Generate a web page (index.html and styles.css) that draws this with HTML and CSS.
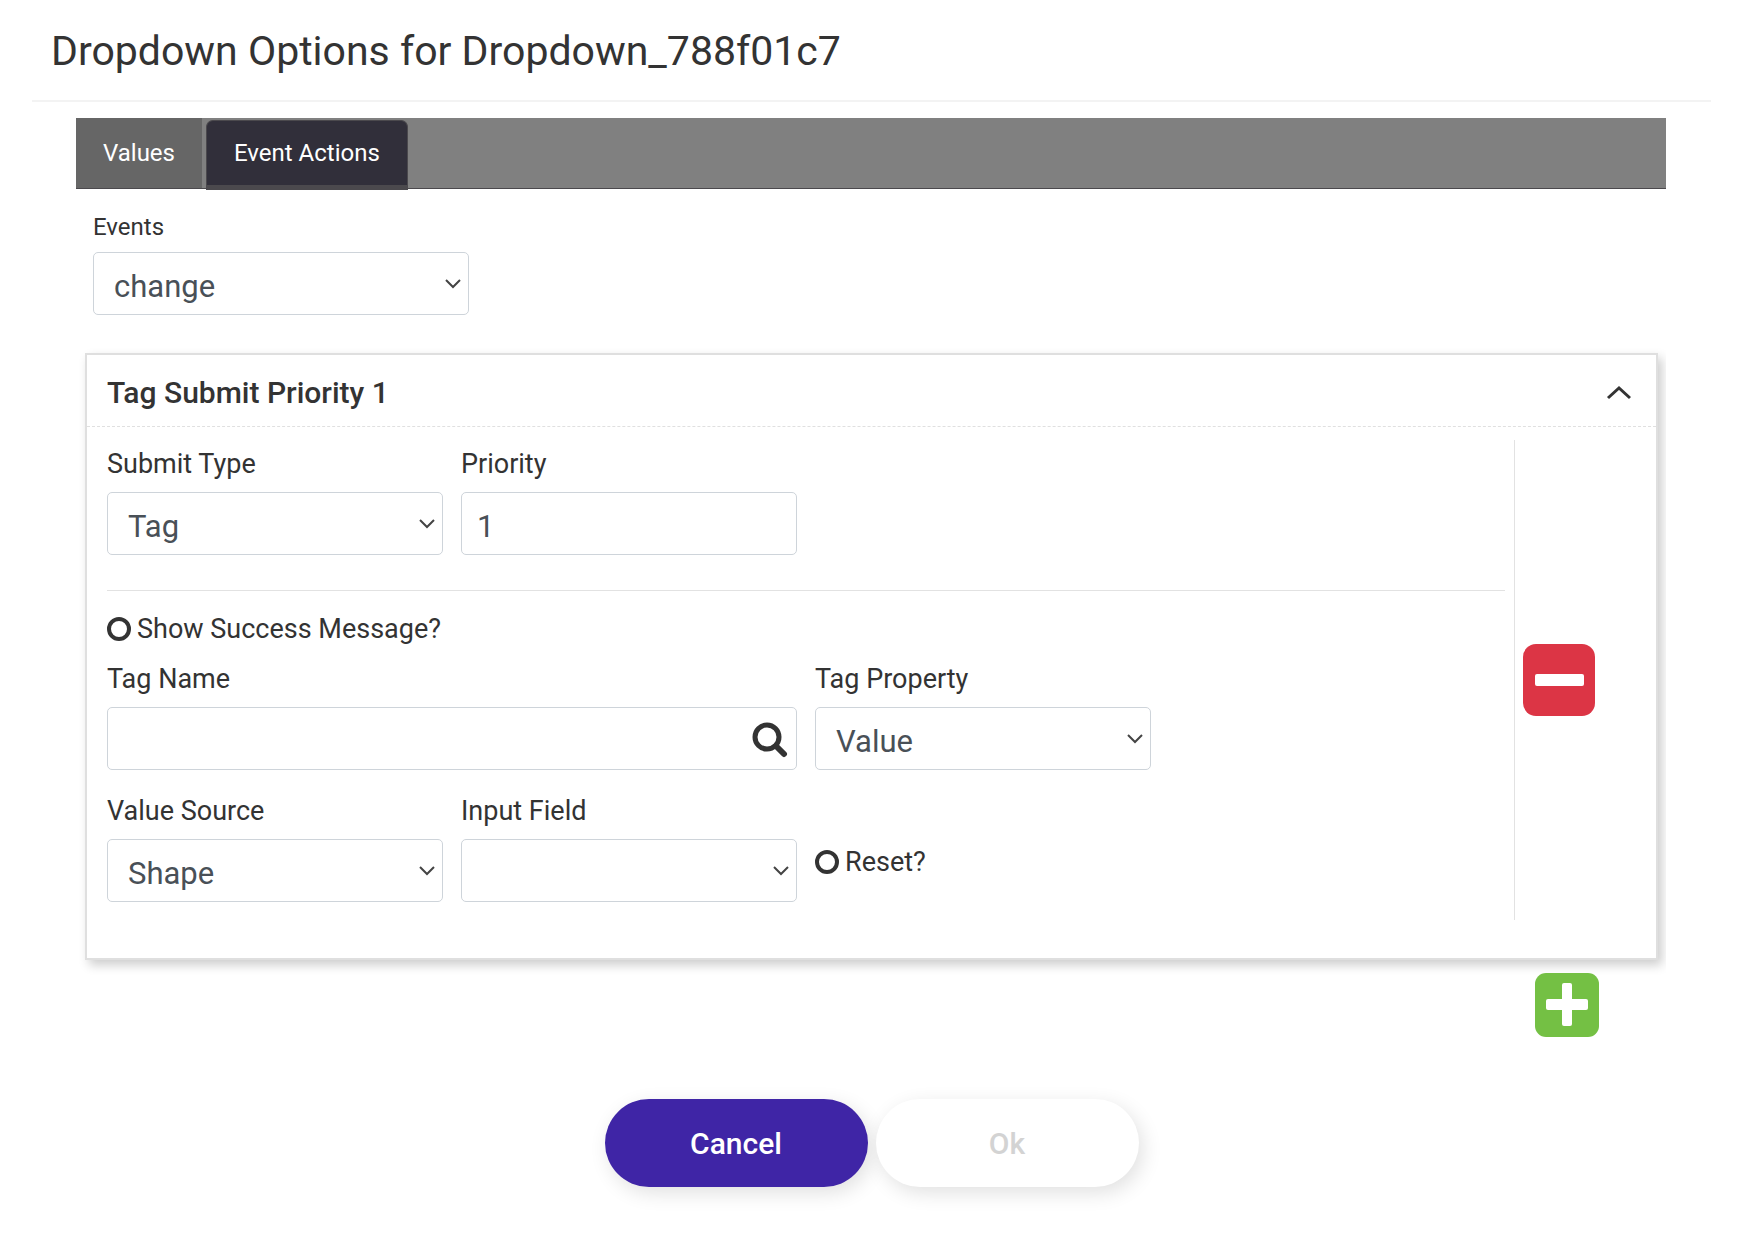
FILE: index.html
```html
<!DOCTYPE html>
<html lang="en">

<head>
    <meta charset="UTF-8">
    <meta name="viewport" content="width=device-width, initial-scale=1.0">
    <title>Dropdown Options</title>
    <link rel="stylesheet" href="styles.css">
</head>

<body>
    <form class="dialog">
        <h1 class="dialog-title">Dropdown Options for Dropdown_788f01c7</h1>

        <div class="dialog-body">
            <div class="tabs" role="tablist">
                <button type="button" class="tab" role="tab">Values</button>
                <button type="button" class="tab active" role="tab" aria-selected="true">Event Actions</button>
            </div>

            <div class="tab-content">
                <div class="events">
                    <label for="events">Events</label>
                    <select id="events" class="control">
                        <option>change</option>
                    </select>
                </div>

                <section class="card">
                    <div class="card-header">
                        <h2>Tag Submit Priority 1</h2>
                        <button type="button" class="icon-btn" aria-label="Collapse">
                            <svg width="26" height="16" viewBox="0 0 26 16">
                                <path d="M2 13L13 3L24 13" fill="none" stroke="#333" stroke-width="3" />
                            </svg>
                        </button>
                    </div>

                    <div class="card-body">
                        <div class="card-main">
                            <div class="row">
                                <div class="field">
                                    <label for="submitType">Submit Type</label>
                                    <select id="submitType" class="control">
                                        <option>Tag</option>
                                    </select>
                                </div>
                                <div class="field">
                                    <label for="priority">Priority</label>
                                    <input type="text" id="priority" class="control" value="1">
                                </div>
                            </div>

                            <hr>

                            <label class="check">
                                <input type="checkbox">
                                Show Success Message?
                            </label>

                            <div class="row">
                                <div class="field wide">
                                    <label for="tagName">Tag Name</label>
                                    <div class="search">
                                        <input type="text" id="tagName" class="control">
                                        <button type="button" class="icon-btn" aria-label="Search">
                                            <svg width="36" height="36" viewBox="0 0 36 36">
                                                <circle cx="15" cy="15" r="12" fill="none" stroke="#333" stroke-width="5" />
                                                <path d="M24 24L32 32" stroke="#333" stroke-width="6" stroke-linecap="round" />
                                            </svg>
                                        </button>
                                    </div>
                                </div>
                                <div class="field">
                                    <label for="tagProperty">Tag Property</label>
                                    <select id="tagProperty" class="control">
                                        <option>Value</option>
                                    </select>
                                </div>
                            </div>

                            <div class="row">
                                <div class="field">
                                    <label for="valueSource">Value Source</label>
                                    <select id="valueSource" class="control">
                                        <option>Shape</option>
                                    </select>
                                </div>
                                <div class="field">
                                    <label for="inputField">Input Field</label>
                                    <select id="inputField" class="control">
                                        <option></option>
                                    </select>
                                </div>
                                <label class="check">
                                    <input type="checkbox">
                                    Reset?
                                </label>
                            </div>
                        </div>

                        <div class="card-side">
                            <button type="button" class="icon-btn" aria-label="Remove action">
                                <svg width="72" height="72" viewBox="0 0 72 72">
                                    <rect width="72" height="72" rx="13" fill="#dc3545" />
                                    <rect x="12" y="30" width="49" height="12" rx="2" fill="#fff" />
                                </svg>
                            </button>
                        </div>
                    </div>
                </section>

                <div class="add-row">
                    <button type="button" class="icon-btn" aria-label="Add action">
                        <svg width="64" height="64" viewBox="0 0 64 64">
                            <rect width="64" height="64" rx="11" fill="#74c044" />
                            <rect x="11" y="26" width="42" height="11" rx="2" fill="#fff" />
                            <rect x="27" y="10" width="10" height="43" rx="2" fill="#fff" />
                        </svg>
                    </button>
                </div>
            </div>
        </div>

        <div class="dialog-footer">
            <button type="button" class="btn primary">Cancel</button>
            <button type="submit" class="btn" disabled>Ok</button>
        </div>
    </form>
</body>

</html>
```
FILE: styles.css
```css
* {
    box-sizing: border-box;
}

body {
    margin: 0;
    background: #fff;
    color: #333;
    font-family: Roboto, "Liberation Sans", sans-serif;
    font-size: 27px;
    line-height: 32px;
}

button,
input,
select {
    font-family: inherit;
}

.dialog {
    padding: 0 32px 40px;
}

.dialog-title {
    margin: 0;
    padding: 23px 19px 21px;
    border-bottom: 2px solid #f3f3f3;
    font-size: 41px;
    font-weight: 400;
    line-height: 56px;
}

.dialog-body {
    margin: 16px 45px 0 44px;
}

/* tabs */
.tabs {
    display: flex;
    gap: 4px;
    height: 71px;
    background: #808080;
    border-bottom: 1px solid #4b494d;
}

.tab {
    padding: 0 27px;
    border: none;
    background: #666;
    color: #fff;
    font-size: 24px;
}

.tab.active {
    height: 70px;
    margin-top: 2px;
    border: 1px solid #4b494d;
    border-bottom-width: 5px;
    border-radius: 7px 7px 0 0;
    background: #312f3a;
}

.tab-content {
    padding: 22px 8px 8px 9px;
    overflow: hidden;
}

/* form controls */
.events {
    width: calc(25% - 9px);
    padding-left: 8px;
    margin-bottom: 38px;
    font-size: 24px;
}

.events label {
    display: block;
    margin-bottom: 9px;
}

.field label {
    display: block;
    margin-bottom: 12px;
}

.control {
    display: block;
    width: 100%;
    height: 63px;
    padding: 5px 15px 0;
    border: 1px solid #ced4da;
    border-radius: 5px;
    background: #fff;
    color: #495057;
    font-size: 31px;
}

select.control {
    appearance: none;
    padding-left: 20px;
    background: url("data:image/svg+xml,%3Csvg xmlns='http://www.w3.org/2000/svg' width='18' height='12'%3E%3Cpath d='M2 2L9 9L16 2' fill='none' stroke='%23444' stroke-width='2'/%3E%3C/svg%3E") no-repeat right 6px center;
}

.check {
    display: flex;
    align-items: center;
    gap: 6px;
    height: 36px;
}

.check input {
    appearance: none;
    width: 24px;
    height: 24px;
    margin: 0;
    border: 4px solid #333;
    border-radius: 50%;
}

.check input:checked {
    background: #333;
}

.icon-btn {
    padding: 0;
    border: none;
    background: none;
    cursor: pointer;
}

.icon-btn svg {
    display: block;
}

.search {
    position: relative;
}

.search .control {
    padding-right: 56px;
}

.search .icon-btn {
    position: absolute;
    top: 15px;
    right: 9px;
}

/* card */
.card {
    border: 2px solid #dfdfdf;
    background: #fff;
    box-shadow: 4px 5px 10px rgba(0, 0, 0, 0.2);
}

.card-header {
    display: flex;
    align-items: center;
    justify-content: space-between;
    height: 72px;
    padding: 4px 24px 0 20px;
    border-bottom: 1px dashed #e0e0e0;
}

.card-header h2 {
    margin: 0;
    font-size: 30px;
    font-weight: 500;
}

.card-body {
    display: flex;
    padding: 13px 0 38px;
}

.card-main {
    flex: 1;
    padding: 8px 9px 18px 20px;
    border-right: 1px solid #e2e2e2;
}

.card-side {
    display: flex;
    align-items: center;
    width: 141px;
    padding-left: 8px;
}

.row {
    display: grid;
    grid-template-columns: repeat(4, 1fr);
    gap: 18px;
}

.row + .row {
    margin-top: 25px;
}

.wide {
    grid-column: span 2;
}

.card-main > .check {
    margin-bottom: 16px;
}

.row .check {
    align-self: end;
    margin-bottom: 22px;
}

hr {
    margin: 35px 0 20px;
    border: none;
    border-top: 1px solid #e2e2e2;
}

.add-row {
    display: flex;
    justify-content: flex-end;
    padding: 13px 59px 0 0;
}

/* footer */
.dialog-footer {
    display: flex;
    justify-content: center;
    gap: 8px;
    margin-top: 54px;
}

.btn {
    width: 263px;
    height: 88px;
    border: none;
    border-radius: 44px;
    background: #fff;
    box-shadow: 4px 6px 20px rgba(0, 0, 0, 0.12);
    font-size: 30px;
    font-weight: 500;
}

.btn.primary {
    background: #3f25a6;
    color: #fff;
}

.btn:disabled {
    color: #d3d3d3;
}
```
